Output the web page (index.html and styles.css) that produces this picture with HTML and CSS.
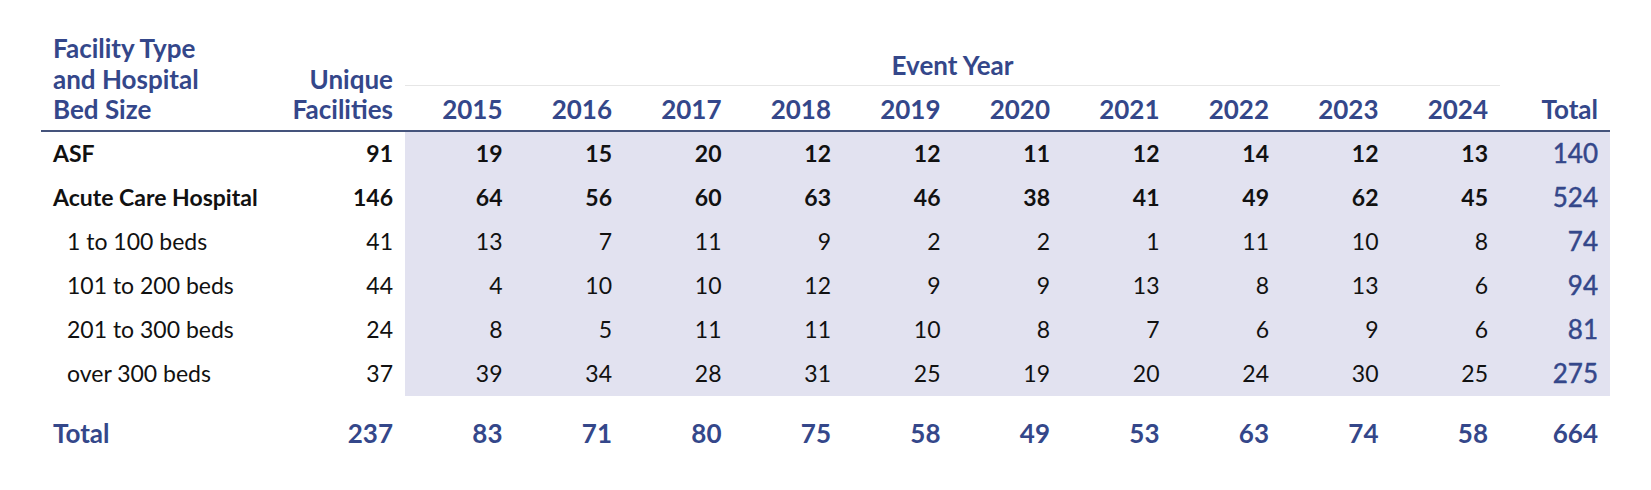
FILE: index.html
```html
<!DOCTYPE html>
<html lang="en">
<head>
<meta charset="utf-8">
<title>Facility Events by Year</title>
<link rel="stylesheet" href="styles.css">
</head>
<body>
<div class="wrap">
<table class="tbl">
  <colgroup>
    <col class="c-label">
    <col class="c-unique">
    <col class="c-year"><col class="c-year"><col class="c-year"><col class="c-year"><col class="c-year">
    <col class="c-year"><col class="c-year"><col class="c-year"><col class="c-year"><col class="c-year">
    <col class="c-total">
  </colgroup>
  <thead>
    <tr class="h1">
      <th class="lbl span" rowspan="2">Facility Type<br>and Hospital<br>Bed Size</th>
      <th class="num span" rowspan="2">Unique<br>Facilities</th>
      <th class="group" colspan="10">Event Year</th>
      <th class="num span" rowspan="2">Total</th>
    </tr>
    <tr class="h2">
      <th class="num yr">2015</th><th class="num yr">2016</th><th class="num yr">2017</th><th class="num yr">2018</th><th class="num yr">2019</th>
      <th class="num yr">2020</th><th class="num yr">2021</th><th class="num yr">2022</th><th class="num yr">2023</th><th class="num yr">2024</th>
    </tr>
  </thead>
  <tbody>
    <tr class="main">
      <td class="lbl">ASF</td><td class="num">91</td>
      <td class="num sh">19</td><td class="num sh">15</td><td class="num sh">20</td><td class="num sh">12</td><td class="num sh">12</td>
      <td class="num sh">11</td><td class="num sh">12</td><td class="num sh">14</td><td class="num sh">12</td><td class="num sh">13</td>
      <td class="num sh tot">140</td>
    </tr>
    <tr class="main">
      <td class="lbl">Acute Care Hospital</td><td class="num">146</td>
      <td class="num sh">64</td><td class="num sh">56</td><td class="num sh">60</td><td class="num sh">63</td><td class="num sh">46</td>
      <td class="num sh">38</td><td class="num sh">41</td><td class="num sh">49</td><td class="num sh">62</td><td class="num sh">45</td>
      <td class="num sh tot">524</td>
    </tr>
    <tr class="sub">
      <td class="lbl">1 to 100 beds</td><td class="num">41</td>
      <td class="num sh">13</td><td class="num sh">7</td><td class="num sh">11</td><td class="num sh">9</td><td class="num sh">2</td>
      <td class="num sh">2</td><td class="num sh">1</td><td class="num sh">11</td><td class="num sh">10</td><td class="num sh">8</td>
      <td class="num sh tot">74</td>
    </tr>
    <tr class="sub">
      <td class="lbl">101 to 200 beds</td><td class="num">44</td>
      <td class="num sh">4</td><td class="num sh">10</td><td class="num sh">10</td><td class="num sh">12</td><td class="num sh">9</td>
      <td class="num sh">9</td><td class="num sh">13</td><td class="num sh">8</td><td class="num sh">13</td><td class="num sh">6</td>
      <td class="num sh tot">94</td>
    </tr>
    <tr class="sub">
      <td class="lbl">201 to 300 beds</td><td class="num">24</td>
      <td class="num sh">8</td><td class="num sh">5</td><td class="num sh">11</td><td class="num sh">11</td><td class="num sh">10</td>
      <td class="num sh">8</td><td class="num sh">7</td><td class="num sh">6</td><td class="num sh">9</td><td class="num sh">6</td>
      <td class="num sh tot">81</td>
    </tr>
    <tr class="sub">
      <td class="lbl">over 300 beds</td><td class="num">37</td>
      <td class="num sh">39</td><td class="num sh">34</td><td class="num sh">28</td><td class="num sh">31</td><td class="num sh">25</td>
      <td class="num sh">19</td><td class="num sh">20</td><td class="num sh">24</td><td class="num sh">30</td><td class="num sh">25</td>
      <td class="num sh tot">275</td>
    </tr>
  </tbody>
  <tfoot>
    <tr class="grand">
      <td class="lbl">Total</td><td class="num">237</td>
      <td class="num">83</td><td class="num">71</td><td class="num">80</td><td class="num">75</td><td class="num">58</td>
      <td class="num">49</td><td class="num">53</td><td class="num">63</td><td class="num">74</td><td class="num">58</td>
      <td class="num">664</td>
    </tr>
  </tfoot>
</table>
</div>
</body>
</html>
```
FILE: styles.css
```css
html, body {
  margin: 0;
  padding: 0;
  background: #ffffff;
}

body {
  font-family: Lato, "Noto Sans", sans-serif;
  color: #111111;
}

.wrap {
  padding: 33px 0 0 41px;
}

.tbl {
  border-collapse: collapse;
  table-layout: fixed;
  width: 1569px;
}

.c-label { width: 219px; }
.c-unique { width: 145px; }
.c-year { width: 109.5px; }
.c-total { width: 110px; }

.tbl th,
.tbl td {
  padding: 0 12px;
  white-space: nowrap;
}

.tbl th {
  color: #34478a;
  font-weight: 700;
  font-size: 26px;
  line-height: 30.5px;
  vertical-align: bottom;
}

.tbl .lbl { text-align: left; }
.tbl .num { text-align: right; }

.h1 { height: 52px; }
.h2 { height: 45px; }

.h1 .group {
  text-align: center;
  padding-bottom: 4px;
  border-bottom: 1px solid #e6e6e6;
}

.h1 .span,
.h2 th {
  padding-bottom: 5px;
  border-bottom: 2px solid #45547c;
}

.tbl td {
  font-size: 23px;
  line-height: 42px;
  height: 42px;
  padding-bottom: 2px;
  vertical-align: middle;
}

.main td { font-weight: 700; }
.sub td { font-weight: 400; }
.sub .lbl { padding-left: 26px; }

.sh { background: #e2e2f0; }

.tbl td.tot {
  color: #34478a;
  font-weight: 400;
  font-size: 26px;
  -webkit-text-stroke: 0.45px #34478a;
}

.grand td {
  color: #34478a;
  font-weight: 700;
  font-size: 26px;
  line-height: 30px;
  height: auto;
  padding-top: 22px;
  padding-bottom: 0;
}
```
